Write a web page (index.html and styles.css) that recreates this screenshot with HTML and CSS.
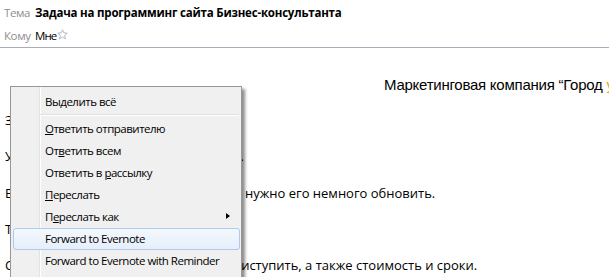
FILE: index.html
```html
<!DOCTYPE html>
<html lang="ru">
<head>
<meta charset="utf-8">
<title>Задача на программинг сайта Бизнес-консультанта</title>
<link rel="stylesheet" href="styles.css">
</head>
<body>
<header class="msg-head">
  <div class="head-row">
    <span class="label">Тема</span>
    <span class="subject">Задача на программинг сайта Бизнес-консультанта</span>
  </div>
  <div class="head-row">
    <span class="label">Кому</span>
    <span class="recipient">Мне</span>
    <svg class="star" width="11" height="11" viewBox="0 0 11 11" aria-hidden="true">
      <path d="M5.5 0.8 L6.9 3.9 L10.2 4.2 L7.7 6.4 L8.4 9.8 L5.5 8.1 L2.6 9.8 L3.3 6.4 L0.8 4.2 L4.1 3.9 Z" fill="#fff" stroke="#a9b0bb" stroke-width="0.9" stroke-linejoin="round"/>
    </svg>
  </div>
</header>

<main class="msg-body">
  <div class="company">Маркетинговая компания “Город <span class="accent">уюта”</span></div>
  <p>Здравствуйте!</p>
  <p>У фирмы есть сайт на старом движке.</p>
  <p>В итоге дизайн сайта нас устраивает, нужно его немного обновить.</p>
  <p>Техническое задание во вложении.</p>
  <p>Сообщите, пожалуйста, готовы ли приступить, а также стоимость и сроки.</p>
</main>

<div class="menu" role="menu">
  <ul class="menu-list">
    <li class="item">Вы<u>д</u>елить всё</li>
    <li class="sep"></li>
    <li class="item"><u>О</u>тветить отправителю</li>
    <li class="item">От<u>в</u>етить всем</li>
    <li class="item">Ответить в <u>р</u>ассылку</li>
    <li class="item"><u>П</u>ереслать</li>
    <li class="item has-sub">П<u>е</u>реслать как<span class="arrow"></span></li>
    <li class="item active">Forward to Evernote</li>
    <li class="item">Forward to Evernote with Reminder</li>
  </ul>
</div>
</body>
</html>
```
FILE: styles.css
```css
html, body {
  margin: 0;
  padding: 0;
  background: #fff;
  overflow: hidden;
}

body {
  width: 609px;
  height: 277px;
  position: relative;
  font-family: "Open Sans", "Noto Sans", sans-serif;
  color: #000;
}

.msg-head {
  height: 48px;
  border-bottom: 1px solid #a7adb9;
  padding: 1px 0 0 4px;
  box-sizing: border-box;
}

.head-row {
  display: flex;
  align-items: center;
  height: 22px;
  font-size: 11.5px;
  letter-spacing: -0.4px;
  white-space: nowrap;
}

.head-row + .head-row {
  margin-top: 1px;
}

.label {
  color: #8e8e8e;
  width: 31px;
}

.subject {
  font-weight: bold;
  letter-spacing: -0.2px;
  color: #000;
}

.recipient {
  color: #000;
  letter-spacing: -0.9px;
}

.star {
  margin-left: 1px;
  margin-top: -2px;
}

.msg-body {
  padding: 28px 0 0 5px;
  font-size: 13px;
  line-height: 18px;
}

.company {
  font-family: "Liberation Sans", Arial, sans-serif;
  font-size: 15px;
  line-height: 18px;
  letter-spacing: -0.25px;
  padding-left: 379px;
  white-space: nowrap;
  margin-bottom: 17px;
}

.accent {
  color: #e8a317;
}

.msg-body p {
  margin: 0 0 18.3px;
  white-space: nowrap;
}

.menu {
  position: absolute;
  left: 10px;
  top: 86px;
  width: 232px;
  height: 200px;
  box-sizing: border-box;
  border: 1px solid #979797;
  background: linear-gradient(to right, #f0f0f0 0 28px, #e2e3e3 28px 29px, #ffffff 29px 30px, #f0f0f0 30px);
  box-shadow: 3px 3px 3px rgba(0, 0, 0, 0.45);
  font-family: "Open Sans", "Noto Sans", sans-serif;
  font-size: 11.5px;
  letter-spacing: -0.5px;
  color: #000;
}

.menu-list {
  list-style: none;
  margin: 0;
  padding: 4px 1px 0 2px;
}

.item {
  position: relative;
  box-sizing: border-box;
  height: 22px;
  line-height: 20px;
  padding-left: 31px;
  border: 1px solid transparent;
  border-radius: 3px;
  white-space: nowrap;
}

.item.active {
  border-color: #aecbef;
  background: linear-gradient(#f4f8fd, #e6eefb);
}

.sep {
  height: 0;
  margin: 1px 1px 2px 27px;
  border-top: 1px solid #e0e0e0;
  border-bottom: 1px solid #ffffff;
}

.arrow {
  position: absolute;
  right: 9px;
  top: 6px;
  width: 0;
  height: 0;
  border-top: 3.5px solid transparent;
  border-bottom: 3.5px solid transparent;
  border-left: 4px solid #000;
}
```
